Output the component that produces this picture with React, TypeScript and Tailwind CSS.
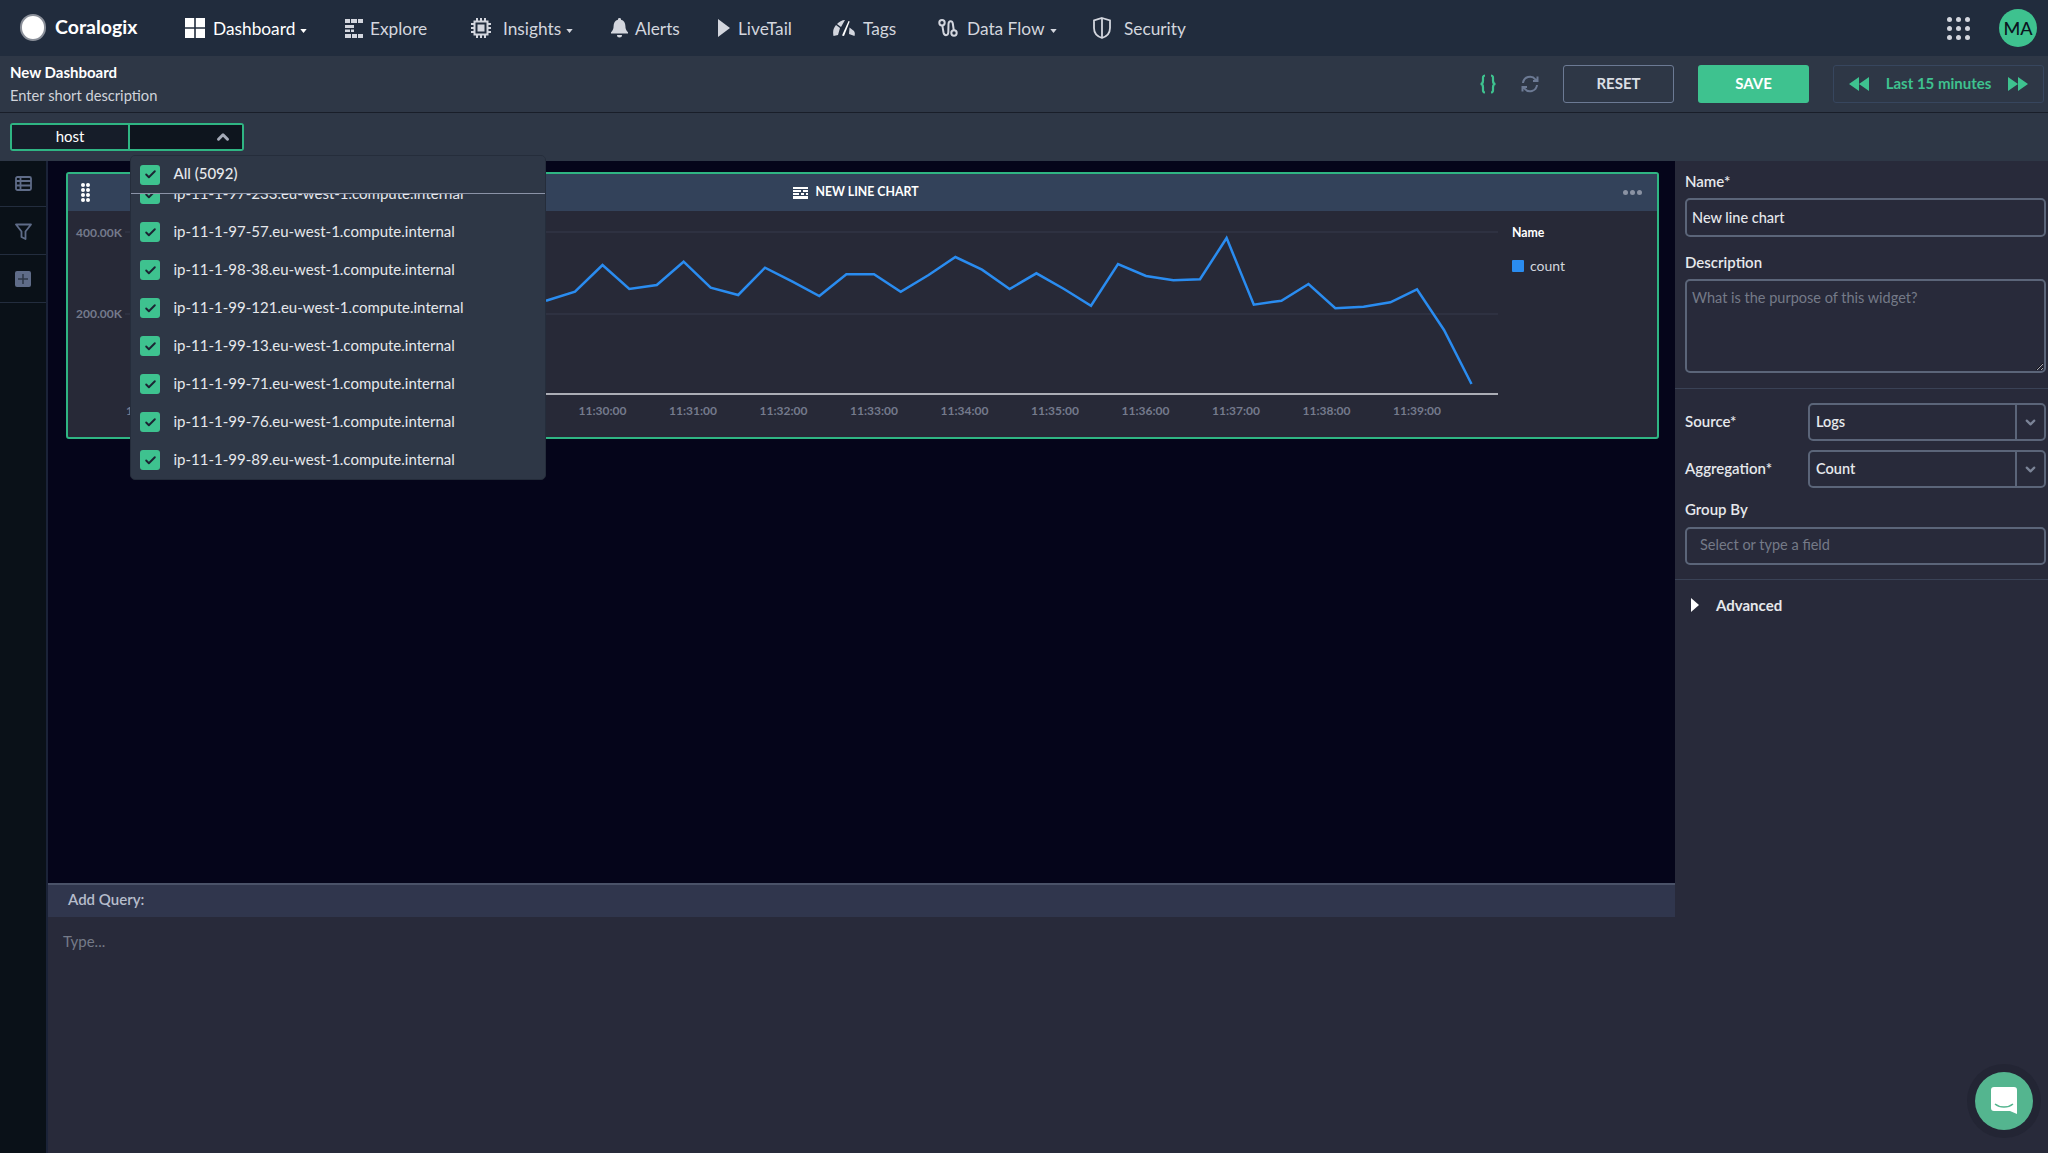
import React from "react";
import { ChevronDown, ChevronUp, Check } from "lucide-react";

const font = "font-['Lato','Noto_Sans',sans-serif]";

const hosts = [
  "ip-11-1-97-233.eu-west-1.compute.internal",
  "ip-11-1-97-57.eu-west-1.compute.internal",
  "ip-11-1-98-38.eu-west-1.compute.internal",
  "ip-11-1-99-121.eu-west-1.compute.internal",
  "ip-11-1-99-13.eu-west-1.compute.internal",
  "ip-11-1-99-71.eu-west-1.compute.internal",
  "ip-11-1-99-76.eu-west-1.compute.internal",
  "ip-11-1-99-89.eu-west-1.compute.internal",
];

const linePoints =
  "546,300.7 575,291.7 602.5,265 629.3,289 656.8,285 683.6,261.7 710.7,287.7 738.2,295 765,267.7 792.5,281.7 819.3,296 846.4,274.3 874,274.3 900.7,291.7 928.6,275 955.4,257 982,269.7 1009.6,289 1036.4,273.3 1064,289 1091,305.7 1118,264 1146,276 1173.4,280.3 1200,279.3 1226.6,238 1253.8,304.7 1281.4,300.7 1308.5,284 1335.3,308.3 1363.6,306.7 1390.4,302.3 1417,289.3 1444,330 1471.5,384";

const ticks = [
  ["11:25:00", 150],
  ["11:30:00", 602.5],
  ["11:31:00", 693],
  ["11:32:00", 783.5],
  ["11:33:00", 874],
  ["11:34:00", 964.5],
  ["11:35:00", 1055],
  ["11:36:00", 1145.5],
  ["11:37:00", 1236],
  ["11:38:00", 1326.5],
  ["11:39:00", 1417],
] as const;

const Caret = () => (
  <svg width="7" height="4" viewBox="0 0 8 5" className="ml-[5px] mt-[4px] shrink-0" fill="currentColor">
    <path d="M0 0h8L4 5z" />
  </svg>
);

const NavItem = ({
  icon,
  label,
  width,
  gap,
  caret,
  active,
}: {
  icon: React.ReactNode;
  label: string;
  width: string;
  gap: string;
  caret?: boolean;
  active?: boolean;
}) => (
  <div className={`flex items-center shrink-0 ${width} ${gap} ${active ? "text-white" : "text-[#d3d6de]"}`}>
    {icon}
    <span className="flex items-center text-[17.3px] pt-[2px]">
      {label}
      {caret && <Caret />}
    </span>
  </div>
);

const TopNav = () => (
  <div className="h-14 bg-[#212c3d] flex items-center pl-5 shrink-0">
    <div className="w-[165px] shrink-0 flex items-center gap-[9px] -mt-[2px]">
      <div className="w-[26px] h-[27px] rounded-full bg-white border-2 border-[#8a8f99]" />
      <span className="text-[19.5px] font-bold text-white">Coralogix</span>
    </div>
    <NavItem
      width="w-[160px]"
      gap="gap-2"
      active
      caret
      label="Dashboard"
      icon={
        <svg width="20" height="20" viewBox="0 0 20 20" fill="currentColor">
          <path d="M0 0h9.2v9.2H0zM10.8 0H20v9.2h-9.2zM0 10.800h9.200V20H0zM10.800 10.800H20V20h-9.200z" />
        </svg>
      }
    />
    <NavItem
      width="w-[126px]"
      gap="gap-[7px]"
      label="Explore"
      icon={
        <svg width="18" height="19" viewBox="0 0 18 19" fill="currentColor">
          <path d="M0 0h5v4H0zM6 0h6v4H6zM13 0h5v4h-5zM0 6h9v3H0zM0 10.500h5V13H0zM6 10.500h3V13H6zM0 15h6v4H0zM7 15h5v4H7zM13 15h5v4h-5z" />
        </svg>
      }
    />
    <NavItem
      width="w-[140px]"
      gap="gap-3"
      caret
      label="Insights"
      icon={
        <svg width="20" height="20" viewBox="0 0 20 20" fill="none" stroke="currentColor" strokeWidth="2">
          <rect x="3.500" y="3.500" width="13" height="13" />
          <rect x="7.500" y="7.500" width="5" height="5" fill="currentColor" />
          <path d="M6 0v3M10 0v3M14 0v3M6 17v3M10 17v3M14 17v3M0 6h3M0 10h3M0 14h3M17 6h3M17 10h3M17 14h3" />
        </svg>
      }
    />
    <NavItem
      width="w-[107px]"
      gap="gap-[7px]"
      label="Alerts"
      icon={
        <svg width="17" height="20" viewBox="0 0 17 20" fill="currentColor">
          <path d="M8.500 0a1.500 1.500 0 0 1 1.500 1.700c3 .7 4.400 3.300 4.400 6.300 0 3 .8 4.600 2.600 6.200v1.300H0v-1.300C1.800 12.600 2.600 11 2.600 8c0-3 1.400-5.600 4.400-6.300A1.500 1.500 0 0 1 8.500 0zM6 17h5a2.500 2.500 0 0 1-5 0z" />
        </svg>
      }
    />
    <NavItem
      width="w-[115px]"
      gap="gap-2"
      label="LiveTail"
      icon={
        <svg width="12" height="18" viewBox="0 0 12 18" fill="currentColor">
          <path d="M0 0l12 9L0 18z" />
        </svg>
      }
    />
    <NavItem
      width="w-[105px]"
      gap="gap-2"
      label="Tags"
      icon={
        <svg width="22" height="18" viewBox="0 0 22 18" fill="currentColor">
          <path d="M.5 17C-.5 12 .5 9 3 6l4 3-2 7zM4 5c2-2 5-4 8-4L8 8z" />
          <path d="M9 16.500L15.500 2l1.200.5L11 17z" fill="white" />
          <path d="M16.500 8.500L21 12c1 1.500 1 3 .5 5L16 15z" />
        </svg>
      }
    />
    <NavItem
      width="w-[155px]"
      gap="gap-[9px]"
      caret
      label="Data Flow"
      icon={
        <svg width="20" height="18" viewBox="0 0 20 18" fill="none" stroke="currentColor" strokeWidth="2">
          <circle cx="4" cy="3.700" r="2.700" />
          <circle cx="16" cy="14" r="2.700" />
          <path d="M4.300 6.400L5.500 13.500C6.200 17 10 17 10.300 13.500L10.500 5C10.800 1.500 14.200 1.500 14.800 4.500L15.800 11.300" />
        </svg>
      }
    />
    <NavItem
      width="w-[180px]"
      gap="gap-[13px]"
      label="Security"
      icon={
        <svg width="18" height="22" viewBox="0 0 18 22" fill="none" stroke="currentColor" strokeWidth="1.800">
          <path d="M9 1l8 2.500V11c0 5-3.500 8.500-8 10-4.500-1.500-8-5-8-10V3.500z" />
          <path d="M9 1v20" />
        </svg>
      }
    />
    <div className="ml-auto mr-[11px] flex items-center gap-[29px]">
      <div className="grid grid-cols-3 gap-1">
        {Array.from({ length: 9 }).map((_, i) => (
          <span key={i} className="w-[5px] h-[5px] rounded-full bg-[#d3d6de]" />
        ))}
      </div>
      <div className="w-[38px] h-[38px] rounded-full bg-[#3ec28f] flex items-center justify-center text-[18px] font-medium text-[#0b1420]">
        MA
      </div>
    </div>
  </div>
);

const SubHeader = () => (
  <div className="h-[57px] bg-[#2e3746] border-b border-[#191e29] flex items-center pl-[10px] pr-1 shrink-0">
    <div>
      <div className="text-[15px] leading-[20px] font-bold text-white -mt-px">New Dashboard</div>
      <div className="text-[14.700px] leading-[20px] text-[#d0d3da] mt-[3px]">Enter short description</div>
    </div>
    <div className="ml-auto flex items-center -mt-px">
      <svg width="18" height="20" viewBox="0 0 18 20" fill="none" stroke="#3ec28f" strokeWidth="2.200" className="mr-[24px]">
        <path d="M6 1.500C3.500 1.500 4 4 4 6.500S3.500 10 1.500 10C3.500 10 4 11 4 13.500s-.5 5 2 5M12 1.500c2.500 0 2 2.500 2 5s.5 3.500 2.500 3.500c-2 0-2.500 1-2.500 3.500s.5 5-2 5" />
      </svg>
      <svg width="18" height="18" viewBox="0 0 18 18" fill="none" stroke="#6c7a94" strokeWidth="2" className="mr-[24px]">
        <path d="M2 8a7 7 0 0 1 12.500-3.500L16.500 6M16.500 1.500V6H12M16 10a7 7 0 0 1-12.500 3.500L1.500 12M1.500 16.500V12H6" />
      </svg>
      <button className="w-[111px] h-[38px] rounded-[3px] border border-[#6c7a94] text-[15px] font-bold text-[#dcdfe5]">RESET</button>
      <button className="w-[111px] h-[38px] ml-6 rounded-[3px] bg-[#3ec28f] text-[15px] font-bold text-white">SAVE</button>
      <div className="w-[211px] h-[38px] ml-6 rounded-[3px] border border-[#37465e] flex items-center justify-between pl-[15px] pr-[15px] text-[#3ec28f]">
        <svg width="20" height="14" viewBox="0 0 20 14" fill="currentColor">
          <path d="M10 0v14L0 7zM20 0v14L10 7z" />
        </svg>
        <span className="text-[15px] font-bold">Last 15 minutes</span>
        <svg width="20" height="14" viewBox="0 0 20 14" fill="currentColor">
          <path d="M0 0v14l10-7zM10 0v14l10-7z" />
        </svg>
      </div>
    </div>
  </div>
);

const GreenBox = () => (
  <span className="w-5 h-5 rounded-[3px] bg-[#3ec28f] flex items-center justify-center shrink-0">
    <Check size={13} strokeWidth={3.500} className="text-[#1c2433]" />
  </span>
);

const FilterRow = () => (
  <div className="h-12 bg-[#2e3746] pl-[10px] pt-[10px] shrink-0 relative z-10">
    <div className="relative w-[234px] h-7 flex border-2 border-[#2fb583] rounded-[3px]">
      <div className="w-[118px] bg-[#161d29] text-white text-[15px] flex items-center justify-center border-r-2 border-[#2fb583] pb-[2px]">
        host
      </div>
      <div className="flex-1 bg-[#0e151e] flex items-center justify-end pr-[10px]">
        <ChevronUp size={18} strokeWidth={4} className="text-[#a5abb8]" />
      </div>
      <div className="absolute left-[118px] top-[30px] w-[416px] h-[325px] bg-[#2e3746] rounded-[5px] border border-[#252d3b] overflow-hidden text-[#e6e8ec] text-[15px]">
        <div className="pt-[38px]">
          <div className="-mt-[19px]">
            {hosts.map((h) => (
              <div key={h} className="h-[38px] flex items-center pl-[9px] gap-[13.500px]">
                <GreenBox />
                <span className="pb-[2px]">{h}</span>
              </div>
            ))}
          </div>
        </div>
        <div className="absolute left-0 right-0 top-0 h-[38px] bg-[#2e3746] border-b border-[#8b93a7] flex items-center pl-[9px] gap-[13.500px]">
          <GreenBox />
          <span className="pb-[2px] font-medium">All (5092)</span>
        </div>
      </div>
    </div>
  </div>
);

const Sidebar = () => (
  <div className="w-12 shrink-0 bg-[#0a1118] border-r-2 border-[#1b2338] text-[#5f6c88]">
    <div className="h-[46px] flex items-center justify-center border-b border-[#232d3e]">
      <svg width="17" height="15" viewBox="0 0 17 15" fill="none" stroke="currentColor" strokeWidth="1.800">
        <rect x="1" y="1" width="15" height="13" rx="1.500" />
        <path d="M1 5h15M1 9.500h15M5.500 1v13" />
      </svg>
    </div>
    <div className="h-12 flex items-center justify-center border-b border-[#232d3e]">
      <svg width="17" height="17" viewBox="0 0 17 17" fill="none" stroke="currentColor" strokeWidth="1.800" strokeLinejoin="round" className="mt-[2px]">
        <path d="M1 1.500h15L10.500 8.500V16l-4-2V8.500z" />
      </svg>
    </div>
    <div className="h-12 flex items-center justify-center border-b border-[#232d3e]">
      <span className="w-4 h-4 rounded-[2px] bg-[#5f6c88] flex items-center justify-center">
        <svg width="10" height="10" viewBox="0 0 10 10" stroke="#2e3746" strokeWidth="1.500">
          <path d="M5 0v10M0 5h10" />
        </svg>
      </span>
    </div>
  </div>
);

const LineChartWidget = () => (
  <div className="h-[267px] border-2 border-[#2fb583] rounded-[3px] bg-[#272937] flex flex-col">
    <div className="h-[37px] bg-[#33425a] shrink-0 flex items-center relative pl-[13px] pr-[15px]">
      <div className="grid grid-cols-2 gap-x-px gap-y-px">
        {Array.from({ length: 8 }).map((_, i) => (
          <span key={i} className="w-1 h-1 rounded-full bg-white" />
        ))}
      </div>
      <div className="flex-1 flex items-center justify-center gap-[7px] text-white pr-[1px]">
        <svg width="15" height="12" viewBox="0 0 15 12" fill="currentColor">
          <path d="M0 0h15v2H0zM0 3h8v2H0zM10 3h5v2h-5zM0 6h6v2H0zM8 6h3v2H8zM13 6h2v2h-2zM0 9h15v3H0z" />
        </svg>
        <span className="text-[12.300px] font-bold">NEW LINE CHART</span>
      </div>
      <div className="flex gap-[2px]">
        <span className="w-[5px] h-[5px] rounded-full bg-[#8a92a3]" />
        <span className="w-[5px] h-[5px] rounded-full bg-[#8a92a3]" />
        <span className="w-[5px] h-[5px] rounded-full bg-[#8a92a3]" />
      </div>
    </div>
    <div className="flex flex-1">
      <svg width="1438" height="226" viewBox="68 211 1438 226" className="shrink-0">
        <path d="M125 232H1498M125 314H1498" stroke="#363a4d" strokeWidth="1" />
        <path d="M135 394H1498" stroke="#d8dae0" strokeWidth="1.500" />
        <text x="76" y="237" fontSize="12" fontWeight="700" fill="#747a8c">400.00K</text>
        <text x="76" y="318" fontSize="12" fontWeight="700" fill="#747a8c">200.00K</text>
        {ticks.map(([t, x]) => (
          <text key={t} x={x} y="415" textAnchor="middle" fontSize="12" fontWeight="700" fill="#747a8c">
            {t}
          </text>
        ))}
        <polyline points={linePoints} fill="none" stroke="#2a8cf0" strokeWidth="2.500" strokeLinejoin="miter" />
      </svg>
      <div className="pl-[6px] pt-[13px]">
        <div className="text-[12.300px] leading-[18px] font-bold text-white">Name</div>
        <div className="flex items-center gap-[6px] mt-[15px]">
          <span className="w-3 h-3 rounded-[1px] bg-[#2a8cf0]" />
          <span className="text-[14px] leading-[18px] text-[#d3d6de]">count</span>
        </div>
      </div>
    </div>
  </div>
);

const fieldClass =
  "w-full h-[39px] rounded-[5px] border-2 border-[#5b6579] bg-transparent text-[14.500px] text-[#e6e8ec] outline-none placeholder:text-[#757a88]";

const SelectField = ({ value }: { value: string }) => (
  <div className="w-[238px] h-[38px] rounded-[5px] border-2 border-[#5b6579] flex items-center">
    <span className="flex-1 pl-[6px] pb-[1px] text-[14.500px] text-[#e6e8ec]">{value}</span>
    <span className="w-[29px] h-full border-l-2 border-[#5b6579] flex items-center justify-center">
      <ChevronDown size={15} strokeWidth={3.500} className="text-[#7b8497]" />
    </span>
  </div>
);

const SettingsPanel = () => (
  <div className="w-[373px] shrink-0 bg-[#282a3a] text-[15px] font-semibold text-[#e6e8ec]">
    <div className="pl-[10px] pr-[2px] pt-[10px]">
      <div className="leading-5">Name*</div>
      <input className={`${fieldClass} mt-[7px] pl-[5px] font-medium`} defaultValue="New line chart" />
      <div className="leading-5 mt-[15px]">Description</div>
      <textarea
        className={`${fieldClass} !h-[94px] mt-[7px] pl-[5px] pt-[6px] font-normal [color-scheme:dark] block`}
        placeholder="What is the purpose of this widget?"
      />
    </div>
    <div className="h-px bg-[#3a4256] mt-[15px]" />
    <div className="pl-[10px] pr-[2px]">
      <div className="flex items-center justify-between mt-[14px]">
        <span className="pb-[1px]">Source*</span>
        <SelectField value="Logs" />
      </div>
      <div className="flex items-center justify-between mt-[9px]">
        <span className="pb-[1px]">Aggregation*</span>
        <SelectField value="Count" />
      </div>
      <div className="leading-5 mt-[11px]">Group By</div>
      <input className={`${fieldClass} !h-[38px] mt-2 pl-[13px] pb-[3px] font-normal`} placeholder="Select or type a field" />
    </div>
    <div className="h-px bg-[#3a4256] mt-[14px]" />
    <div className="flex items-center h-5 mt-[15px] pl-4 gap-[17px]">
      <svg width="8" height="14" viewBox="0 0 8 14" fill="white">
        <path d="M0 0l8 7-8 7z" />
      </svg>
      <span className="font-bold">Advanced</span>
    </div>
  </div>
);

export default function App() {
  return (
    <div className={`${font} relative h-screen w-full overflow-hidden flex flex-col bg-[#05051a]`}>
      <TopNav />
      <SubHeader />
      <FilterRow />
      <div className="flex flex-1 min-h-0">
        <Sidebar />
        <div className="flex-1 flex flex-col min-w-0">
          <div className="flex-1 pt-[11px] pl-[18px] pr-[16px]">
            <LineChartWidget />
          </div>
          <div className="h-[270px] shrink-0 bg-[#282a3a]">
            <div className="h-[34px] bg-[#30364d] border-t-2 border-[#4a5268] flex items-center pl-5 pb-[3px] text-[15px] font-semibold text-[#b6bccb]">
              Add Query:
            </div>
            <div className="pl-[15px] pt-[13px] text-[15px] text-[#757a88]">Type...</div>
          </div>
        </div>
        <SettingsPanel />
      </div>
      <div className="absolute right-[15px] bottom-[23px] w-[58px] h-[58px] rounded-full bg-[#54b58f] flex items-center justify-center shadow-[0_0_0_8px_rgba(30,32,46,0.5)]">
        <svg width="26" height="28" viewBox="0 0 26 28">
          <path d="M3 0h20a3 3 0 0 1 3 3v24l-7-3H3a3 3 0 0 1-3-3V3a3 3 0 0 1 3-3z" fill="white" />
          <path d="M4 17c5 4 13 4 18 0" fill="none" stroke="#54b58f" strokeWidth="1.500" />
        </svg>
      </div>
    </div>
  );
}
